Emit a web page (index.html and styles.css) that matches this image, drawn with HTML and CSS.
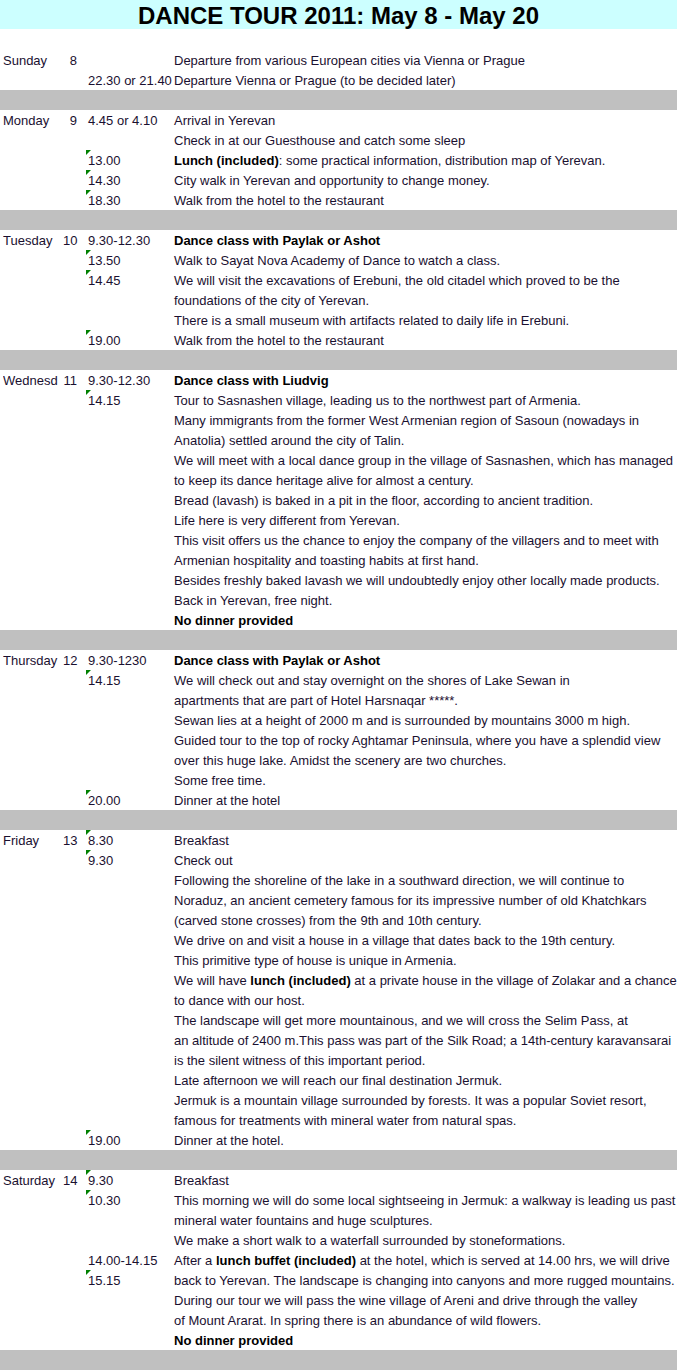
FILE: index.html
```html
<!DOCTYPE html>
<html>
<head>
<meta charset="utf-8">
<title>Dance Tour 2011</title>
<link rel="stylesheet" href="styles.css">
</head>
<body>
<header class="title">DANCE TOUR 2011: May 8 - May 20</header>
<div class="spacer"></div>

<section class="day">
  <div class="row"><span class="dname">Sunday</span><span class="dnum">8</span><span class="time"></span><span class="text">Departure from various European cities via Vienna or Prague</span></div>
  <div class="row"><span class="dname"></span><span class="dnum"></span><span class="time">22.30 or 21.40</span><span class="text">Departure Vienna or Prague (to be decided later)</span></div>
</section>
<div class="sep"></div>

<section class="day">
  <div class="row"><span class="dname">Monday</span><span class="dnum">9</span><span class="time">4.45 or 4.10</span><span class="text">Arrival in Yerevan</span></div>
  <div class="row"><span class="dname"></span><span class="dnum"></span><span class="time"></span><span class="text">Check in at our Guesthouse and catch some sleep</span></div>
  <div class="row"><span class="dname"></span><span class="dnum"></span><span class="time note">13.00</span><span class="text"><b>Lunch (included)</b>: some practical information, distribution map of Yerevan.</span></div>
  <div class="row"><span class="dname"></span><span class="dnum"></span><span class="time note">14.30</span><span class="text">City walk in Yerevan and opportunity to change money.</span></div>
  <div class="row"><span class="dname"></span><span class="dnum"></span><span class="time note">18.30</span><span class="text">Walk from the hotel to the restaurant</span></div>
</section>
<div class="sep"></div>

<section class="day">
  <div class="row"><span class="dname">Tuesday</span><span class="dnum">10</span><span class="time">9.30-12.30</span><span class="text"><b>Dance class with Paylak or Ashot</b></span></div>
  <div class="row"><span class="dname"></span><span class="dnum"></span><span class="time note">13.50</span><span class="text">Walk to Sayat Nova Academy of Dance to watch a class.</span></div>
  <div class="row"><span class="dname"></span><span class="dnum"></span><span class="time note">14.45</span><span class="text">We will visit the excavations of Erebuni, the old citadel which proved to be the</span></div>
  <div class="row"><span class="dname"></span><span class="dnum"></span><span class="time"></span><span class="text">foundations of the city of Yerevan.</span></div>
  <div class="row"><span class="dname"></span><span class="dnum"></span><span class="time"></span><span class="text">There is a small museum with artifacts related to daily life in Erebuni.</span></div>
  <div class="row"><span class="dname"></span><span class="dnum"></span><span class="time note">19.00</span><span class="text">Walk from the hotel to the restaurant</span></div>
</section>
<div class="sep"></div>

<section class="day">
  <div class="row"><span class="dname">Wednesd</span><span class="dnum">11</span><span class="time">9.30-12.30</span><span class="text"><b>Dance class with Liudvig</b></span></div>
  <div class="row"><span class="dname"></span><span class="dnum"></span><span class="time note">14.15</span><span class="text">Tour to Sasnashen village, leading us to the northwest part of Armenia.</span></div>
  <div class="row"><span class="dname"></span><span class="dnum"></span><span class="time"></span><span class="text">Many immigrants from the former West Armenian region of Sasoun (nowadays in</span></div>
  <div class="row"><span class="dname"></span><span class="dnum"></span><span class="time"></span><span class="text">Anatolia) settled around the city of Talin.</span></div>
  <div class="row"><span class="dname"></span><span class="dnum"></span><span class="time"></span><span class="text">We will meet with a local dance group in the village of Sasnashen, which has managed</span></div>
  <div class="row"><span class="dname"></span><span class="dnum"></span><span class="time"></span><span class="text">to keep its dance heritage alive for almost a century.</span></div>
  <div class="row"><span class="dname"></span><span class="dnum"></span><span class="time"></span><span class="text">Bread (lavash) is baked in a pit in the floor, according to ancient tradition.</span></div>
  <div class="row"><span class="dname"></span><span class="dnum"></span><span class="time"></span><span class="text">Life here is very different from Yerevan.</span></div>
  <div class="row"><span class="dname"></span><span class="dnum"></span><span class="time"></span><span class="text">This visit offers us the chance to enjoy the company of the villagers and to meet with</span></div>
  <div class="row"><span class="dname"></span><span class="dnum"></span><span class="time"></span><span class="text">Armenian hospitality and toasting habits at first hand.</span></div>
  <div class="row"><span class="dname"></span><span class="dnum"></span><span class="time"></span><span class="text">Besides freshly baked lavash we will undoubtedly enjoy other locally made products.</span></div>
  <div class="row"><span class="dname"></span><span class="dnum"></span><span class="time"></span><span class="text">Back in Yerevan, free night.</span></div>
  <div class="row"><span class="dname"></span><span class="dnum"></span><span class="time"></span><span class="text"><b>No dinner provided</b></span></div>
</section>
<div class="sep"></div>

<section class="day">
  <div class="row"><span class="dname">Thursday</span><span class="dnum">12</span><span class="time">9.30-1230</span><span class="text"><b>Dance class with Paylak or Ashot</b></span></div>
  <div class="row"><span class="dname"></span><span class="dnum"></span><span class="time note">14.15</span><span class="text">We will check out and stay overnight on the shores of Lake Sewan in</span></div>
  <div class="row"><span class="dname"></span><span class="dnum"></span><span class="time"></span><span class="text">apartments that are part of Hotel Harsnaqar *****.</span></div>
  <div class="row"><span class="dname"></span><span class="dnum"></span><span class="time"></span><span class="text">Sewan lies at a height of 2000 m and is surrounded by mountains 3000 m high.</span></div>
  <div class="row"><span class="dname"></span><span class="dnum"></span><span class="time"></span><span class="text">Guided tour to the top of rocky Aghtamar Peninsula, where you have a splendid view</span></div>
  <div class="row"><span class="dname"></span><span class="dnum"></span><span class="time"></span><span class="text">over this huge lake. Amidst the scenery are two churches.</span></div>
  <div class="row"><span class="dname"></span><span class="dnum"></span><span class="time"></span><span class="text">Some free time.</span></div>
  <div class="row"><span class="dname"></span><span class="dnum"></span><span class="time note">20.00</span><span class="text">Dinner at the hotel</span></div>
</section>
<div class="sep"></div>

<section class="day">
  <div class="row"><span class="dname">Friday</span><span class="dnum">13</span><span class="time note">8.30</span><span class="text">Breakfast</span></div>
  <div class="row"><span class="dname"></span><span class="dnum"></span><span class="time note">9.30</span><span class="text">Check out</span></div>
  <div class="row"><span class="dname"></span><span class="dnum"></span><span class="time"></span><span class="text">Following the shoreline of the lake in a southward direction, we will continue to</span></div>
  <div class="row"><span class="dname"></span><span class="dnum"></span><span class="time"></span><span class="text">Noraduz, an ancient cemetery famous for its impressive number of old Khatchkars</span></div>
  <div class="row"><span class="dname"></span><span class="dnum"></span><span class="time"></span><span class="text">(carved stone crosses) from the 9th and 10th century.</span></div>
  <div class="row"><span class="dname"></span><span class="dnum"></span><span class="time"></span><span class="text">We drive on and visit a house in a village that dates back to the 19th century.</span></div>
  <div class="row"><span class="dname"></span><span class="dnum"></span><span class="time"></span><span class="text">This primitive type of house is unique in Armenia.</span></div>
  <div class="row"><span class="dname"></span><span class="dnum"></span><span class="time"></span><span class="text">We will have <b>lunch (included)</b> at a private house in the village of Zolakar and a chance</span></div>
  <div class="row"><span class="dname"></span><span class="dnum"></span><span class="time"></span><span class="text">to dance with our host.</span></div>
  <div class="row"><span class="dname"></span><span class="dnum"></span><span class="time"></span><span class="text">The landscape will get more mountainous, and we will cross the Selim Pass, at</span></div>
  <div class="row"><span class="dname"></span><span class="dnum"></span><span class="time"></span><span class="text">an altitude of 2400 m.This pass was part of the Silk Road; a 14th-century karavansarai</span></div>
  <div class="row"><span class="dname"></span><span class="dnum"></span><span class="time"></span><span class="text">is the silent witness of this important period.</span></div>
  <div class="row"><span class="dname"></span><span class="dnum"></span><span class="time"></span><span class="text">Late afternoon we will reach our final destination Jermuk.</span></div>
  <div class="row"><span class="dname"></span><span class="dnum"></span><span class="time"></span><span class="text">Jermuk is a mountain village surrounded by forests. It was a popular Soviet resort,</span></div>
  <div class="row"><span class="dname"></span><span class="dnum"></span><span class="time"></span><span class="text">famous for treatments with mineral water from natural spas.</span></div>
  <div class="row"><span class="dname"></span><span class="dnum"></span><span class="time note">19.00</span><span class="text">Dinner at the hotel.</span></div>
</section>
<div class="sep"></div>

<section class="day">
  <div class="row"><span class="dname">Saturday</span><span class="dnum">14</span><span class="time note">9.30</span><span class="text">Breakfast</span></div>
  <div class="row"><span class="dname"></span><span class="dnum"></span><span class="time note">10.30</span><span class="text">This morning we will do some local sightseeing in Jermuk: a walkway is leading us past</span></div>
  <div class="row"><span class="dname"></span><span class="dnum"></span><span class="time"></span><span class="text">mineral water fountains and huge sculptures.</span></div>
  <div class="row"><span class="dname"></span><span class="dnum"></span><span class="time"></span><span class="text">We make a short walk to a waterfall surrounded by stoneformations.</span></div>
  <div class="row"><span class="dname"></span><span class="dnum"></span><span class="time">14.00-14.15</span><span class="text">After a <b>lunch buffet (included)</b> at the hotel, which is served at 14.00 hrs, we will drive</span></div>
  <div class="row"><span class="dname"></span><span class="dnum"></span><span class="time note">15.15</span><span class="text">back to Yerevan. The landscape is changing into canyons and more rugged mountains.</span></div>
  <div class="row"><span class="dname"></span><span class="dnum"></span><span class="time"></span><span class="text">During our tour we will pass the wine village of Areni and drive through the valley</span></div>
  <div class="row"><span class="dname"></span><span class="dnum"></span><span class="time"></span><span class="text">of Mount Ararat. In spring there is an abundance of wild flowers.</span></div>
  <div class="row"><span class="dname"></span><span class="dnum"></span><span class="time"></span><span class="text"><b>No dinner provided</b></span></div>
</section>
<div class="sep"></div>
</body>
</html>
```

FILE: styles.css
```css
html, body {
  margin: 0;
  padding: 0;
  background: #ffffff;
}
body {
  width: 677px;
  overflow: hidden;
  font-family: "Liberation Sans", Arial, sans-serif;
  font-size: 13px;
  color: #1a1030;
}
.title {
  height: 29px;
  background: #ccffff;
  color: #000000;
  font-weight: bold;
  font-size: 24px;
  line-height: 31px;
  text-align: center;
  white-space: nowrap;
}
.spacer {
  height: 21px;
}
.sep {
  height: 20px;
  background: #c0c0c0;
}
.row {
  display: grid;
  grid-template-columns: 60px 14px 97px 1fr;
  box-sizing: border-box;
  height: 20px;
  line-height: 18px;
  padding-top: 2px;
  padding-left: 3px;
  white-space: nowrap;
}
.dname {
  overflow: hidden;
}
.dnum {
  text-align: right;
}
.time {
  position: relative;
  padding-left: 11px;
}
.note::before {
  content: "";
  position: absolute;
  left: 9px;
  top: -2px;
  width: 0;
  height: 0;
  border-top: 5px solid #008000;
  border-right: 5px solid transparent;
}
.text b {
  color: #000000;
}
```
